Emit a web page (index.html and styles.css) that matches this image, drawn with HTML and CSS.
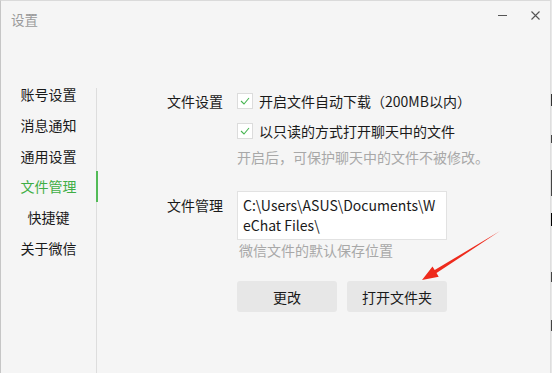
FILE: index.html
```html
<!DOCTYPE html>
<html lang="zh-CN">
<head>
  <meta charset="UTF-8">
  <title>设置</title>
  <link rel="stylesheet" href="styles.css">
</head>
<body>
  <div class="window">
    <div class="titlebar">
      <span class="title">设置</span>
      <div class="controls">
        <svg class="ctl" width="9" height="9" viewBox="0 0 9 9"><line x1="0" y1="4.5" x2="9" y2="4.5" stroke="#555" stroke-width="1"/></svg>
        <svg class="ctl" width="9" height="9" viewBox="0 0 9 9"><path d="M0.5 0.5 L8.5 8.5 M8.5 0.5 L0.5 8.5" stroke="#555" stroke-width="1.1" fill="none"/></svg>
      </div>
    </div>

    <div class="main">
      <ul class="nav">
        <li>账号设置</li>
        <li>消息通知</li>
        <li>通用设置</li>
        <li class="active">文件管理</li>
        <li>快捷键</li>
        <li>关于微信</li>
      </ul>
      <div class="divider"></div>

      <div class="content">
        <!-- file settings -->
        <div class="section">
          <div class="label">文件设置</div>
          <div class="fields">
            <label class="check">
              <span class="box"><svg width="14" height="14" viewBox="0 0 14 14"><polyline points="3,7 6,10 11,4" fill="none" stroke="#46b450" stroke-width="1.1"/></svg></span>
              开启文件自动下载（200MB以内）
            </label>
            <label class="check">
              <span class="box"><svg width="14" height="14" viewBox="0 0 14 14"><polyline points="3,7 6,10 11,4" fill="none" stroke="#46b450" stroke-width="1.1"/></svg></span>
              以只读的方式打开聊天中的文件
            </label>
            <div class="hint">开启后，可保护聊天中的文件不被修改。</div>
          </div>
        </div>

        <!-- file location -->
        <div class="section section-path">
          <div class="label label-path">文件管理</div>
          <div class="fields">
            <div class="path">C:\Users\ASUS\Documents\W<br>eChat Files\</div>
            <div class="hint hint-path">微信文件的默认保存位置</div>
            <div class="buttons">
              <button class="btn">更改</button>
              <button class="btn">打开文件夹</button>
            </div>
          </div>
        </div>
      </div>
    </div>

    <svg class="arrow" width="552" height="373" viewBox="0 0 552 373">
      <polygon points="422,280 432.5,266.5 434.7,270.1 500,231 436.5,273.1 438.7,276.7" fill="#ee2a1c"/>
    </svg>
  </div>
  <div class="edge"></div>
</body>
</html>
```

FILE: styles.css
```css
body {
  margin: 0;
  display: flex;
  width: 552px;
  height: 373px;
  overflow: hidden;
  font-family: "Noto Sans CJK SC", "Microsoft YaHei", sans-serif;
  background-color: #f5f5f5;
}
.window {
  position: relative;
  width: 551px;
  height: 373px;
  box-sizing: border-box;
  border-left: 1px solid #c6c6c6;
  border-top: 1px solid #dadada;
  border-right: 1px solid #dedede;
  background-color: #f5f5f5;
  display: flex;
  flex-direction: column;
}
.edge {
  width: 1px;
  height: 373px;
  background: linear-gradient(#e8e8e8 94px, #333 94px, #333 106px, #e8e8e8 106px,
    #e8e8e8 135px, #444 135px, #444 143px, #e8e8e8 143px,
    #e8e8e8 170px, #444 170px, #444 196px, #e8e8e8 196px,
    #e8e8e8 213px, #000 213px, #000 226px, #e8e8e8 226px,
    #e8e8e8 272px, #444 272px, #444 282px, #e8e8e8 282px,
    #e8e8e8 320px, #444 320px, #444 331px, #e8e8e8 331px);
}
.titlebar {
  height: 78px;
  display: flex;
  justify-content: space-between;
  align-items: flex-start;
}
.title {
  padding: 10px 0 0 10px;
  font-size: 13.5px;
  line-height: 17px;
  color: #9a9a9a;
}
.controls {
  display: flex;
  gap: 24px;
  padding: 10px 10px 0 0;
}
.ctl {
  display: block;
}
.main {
  flex: 1;
  display: flex;
}
.nav {
  list-style: none;
  margin: 0;
  padding: 0;
  width: 95px;
  font-size: 14px;
  color: #1a1a1a;
}
.nav li {
  position: relative;
  height: 30.8px;
  line-height: 30.8px;
  text-align: center;
}
.nav li.active {
  color: #3fae45;
}
.nav li.active::after {
  content: "";
  position: absolute;
  right: -2px;
  top: 0;
  width: 2px;
  height: 100%;
  background-color: #52bb57;
}
.divider {
  width: 1px;
  margin-top: 9px;
  background-color: #dddddd;
}
.content {
  padding: 7px 0 0 70px;
  font-size: 14px;
  color: #1a1a1a;
}
.section {
  display: flex;
}
.label {
  width: 70px;
  line-height: 30px;
}
.fields {
  display: flex;
  flex-direction: column;
}
.check {
  height: 30px;
  display: flex;
  align-items: center;
  gap: 6px;
}
.box {
  width: 16px;
  height: 16px;
  box-sizing: border-box;
  border: 1px solid #dcdcdc;
  background-color: #fff;
  display: flex;
  align-items: center;
  justify-content: center;
}
.box svg {
  display: block;
}
.hint {
  line-height: 22px;
  color: #a8a8a8;
}
.section-path {
  margin-top: 23px;
}
.label-path {
  padding-top: 4px;
  line-height: 20px;
}
.path {
  width: 210px;
  box-sizing: border-box;
  padding: 3px 5px 4px;
  border: 1px solid #e2e2e2;
  background-color: #fff;
  line-height: 20px;
  white-space: nowrap;
  overflow: hidden;
}
.hint-path {
  padding-left: 2px;
  line-height: 20px;
}
.buttons {
  display: flex;
  gap: 10px;
  margin-top: 21px;
}
.btn {
  width: 100px;
  height: 31px;
  border: none;
  border-radius: 3px;
  background-color: #e7e7e7;
  font-family: inherit;
  font-size: 14px;
  color: #1a1a1a;
  padding: 0;
}
.arrow {
  position: absolute;
  left: -1px;
  top: -1px;
  pointer-events: none;
}
```
